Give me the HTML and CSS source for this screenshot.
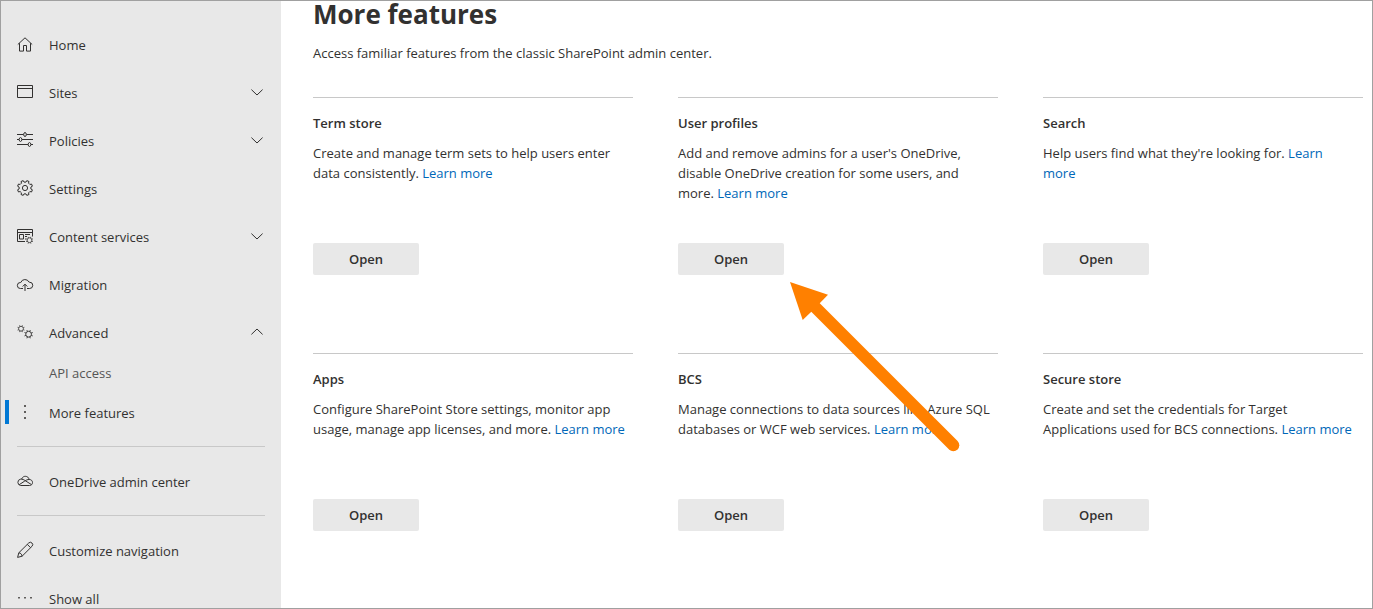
FILE: index.html
```html
<!DOCTYPE html>
<html lang="en">
<head>
<meta charset="utf-8">
<meta name="viewport" content="width=device-width, initial-scale=1">
<title>More features - SharePoint admin center</title>
<link rel="stylesheet" href="styles.css">
</head>
<body>
<svg class="defs" aria-hidden="true">
  <defs>
    <g id="small-gear" stroke-width=".8">
      <circle r="2.4"/>
      <path d="M2.3 1L3.4 1.400M1 2.300L1.400 3.400M-1 2.300L-1.400 3.400M-2.300 1L-3.400 1.400M-2.300-1L-3.400-1.400M-1-2.300L-1.400-3.400M1-2.300L1.400-3.400M2.300-1L3.400-1.400"/>
    </g>
  </defs>
</svg>
<div class="page">
  <nav class="sidebar" aria-label="Admin navigation">
    <ul class="nav-list">
      <li><a class="nav-item" href="#home">
        <svg class="icon" viewBox="0 0 16 16" aria-hidden="true"><path d="M.8 7.500L8 .8l7.200 6.700M2.500 6.200v7.900h4V8.500h3v5.600h4V6.200"/></svg>
        <span>Home</span></a></li>
      <li><button class="nav-item" type="button" aria-expanded="false">
        <svg class="icon" viewBox="0 0 16 16" aria-hidden="true"><path d="M.5.5h15v12H.5zM.5 3.500h15"/></svg>
        <span>Sites</span>
        <svg class="chevron" viewBox="0 0 12 8" aria-hidden="true"><path d="M.4 .6L6 6 11.600 .6"/></svg></button></li>
      <li><button class="nav-item" type="button" aria-expanded="false">
        <svg class="icon" viewBox="0 0 16 16" aria-hidden="true"><path d="M0 1.500h6.600M9.400 1.500H16M0 6.500h2M5 6.500h11M0 11.500h11M14 11.500h2"/><ellipse cx="8" cy="1.500" rx="1.300" ry="2"/><ellipse cx="3.500" cy="6.500" rx="1.300" ry="2"/><ellipse cx="12.500" cy="11.500" rx="1.300" ry="2"/></svg>
        <span>Policies</span>
        <svg class="chevron" viewBox="0 0 12 8" aria-hidden="true"><path d="M.4 .6L6 6 11.600 .6"/></svg></button></li>
      <li><a class="nav-item" href="#settings">
        <svg class="icon" viewBox="0 0 16 16" aria-hidden="true"><g transform="translate(8 7)"><path d="M5.900 1L7.400 1.800 6.500 4 4.900 3.500 3.500 4.900 4 6.500 1.800 7.400 1 5.900-1 5.900-1.800 7.400-4 6.500-3.500 4.900-4.900 3.500-6.500 4-7.400 1.800-5.900 1-5.900-1-7.400-1.800-6.500-4-4.900-3.500-3.500-4.900-4-6.500-1.800-7.400-1-5.900 1-5.900 1.800-7.400 4-6.500 3.500-4.900 4.900-3.500 6.500-4 7.400-1.800 5.900-1z"/><circle r="2.600"/></g></svg>
        <span>Settings</span></a></li>
      <li><button class="nav-item" type="button" aria-expanded="false">
        <svg class="icon" viewBox="0 0 16 16" aria-hidden="true"><path d="M8 12.500H.5V.5h15v7M.5 3.500h15M2.500 5.500h4v4.500h-4zM8 5.500h5M8 7.500h2M8 10h1"/><use href="#small-gear" x="12.500" y="11.200"/></svg>
        <span>Content services</span>
        <svg class="chevron" viewBox="0 0 12 8" aria-hidden="true"><path d="M.4 .6L6 6 11.600 .6"/></svg></button></li>
      <li><a class="nav-item" href="#migration">
        <svg class="icon" viewBox="0 0 16 16" aria-hidden="true"><path d="M6 11.500H3.500a3 3 0 0 1-.3-6h.6a4.400 4.400 0 0 1 8.200-.3h.6a3.100 3.100 0 0 1 0 6.300H10M8 14V7.200M5.700 9.500L8 7.200l2.300 2.300"/></svg>
        <span>Migration</span></a></li>
      <li><button class="nav-item" type="button" aria-expanded="true">
        <svg class="icon" viewBox="0 0 16 16" aria-hidden="true"><use href="#small-gear" x="4" y="3.700"/><use href="#small-gear" transform="translate(11.600 9.200) scale(1.200)"/></svg>
        <span>Advanced</span>
        <svg class="chevron" viewBox="0 0 12 8" aria-hidden="true"><path d="M.4 5.400L6 0 11.600 5.400"/></svg></button>
        <ul class="subnav">
          <li><a class="nav-item nav-item-child" href="#api">API access</a></li>
          <li><a class="nav-item nav-item-current" href="#more" aria-current="page">
            <svg class="icon icon-dots" viewBox="0 0 16 16" aria-hidden="true"><path d="M7 0h2v2H7zM7 6h2v2H7zM7 12h2v2H7z"/></svg>
            <span>More features</span></a></li>
        </ul></li>
    </ul>
    <ul class="nav-list">
      <li><a class="nav-item" href="#onedrive">
        <svg class="icon" viewBox="0 0 16 16" aria-hidden="true"><path d="M3.700 11.500a3.200 3.200 0 0 1-.3-6.300h1C5.600 2.900 7 2.300 8.300 2.300c2 0 3.400 1.200 3.900 3.200 2.100 0 3.300 1.300 3.300 3s-1.200 3-3 3zM4.400 5.200c1.300 0 2.300.4 3.300 1.100l6.600 4.200M2.200 10.700l5.500-3.600c1.400-1 2.800-1.600 4.500-1.600"/></svg>
        <span>OneDrive admin center</span></a></li>
    </ul>
    <ul class="nav-list">
      <li><a class="nav-item" href="#customize">
        <svg class="icon" viewBox="0 0 16 16" aria-hidden="true"><path d="M.6 14.400l1.200-4.600L11.700 0a2.300 2.300 0 0 1 3.300 3.300L5.100 13.200zM1.800 9.800c1.900.2 3.100 1.400 3.300 3.400M10.300 1.400l3.300 3.300"/></svg>
        <span>Customize navigation</span></a></li>
      <li><button class="nav-item" type="button">
        <svg class="icon icon-dots" viewBox="0 0 16 16" aria-hidden="true"><path d="M1 6h2v1.500H1zM7 6h2v1.500H7zM13 6h2v1.500h-2z"/></svg>
        <span>Show all</span></button></li>
    </ul>
  </nav>
  <main class="content">
    <h1 class="title">More features</h1>
    <p class="intro">Access familiar features from the classic SharePoint admin center.</p>
    <div class="cards">
      <section class="card">
        <h2 class="card-title">Term store</h2>
        <p class="card-text">Create and manage term sets to help users enter data consistently. <a href="#term">Learn more</a></p>
        <button class="open" type="button">Open</button>
      </section>
      <section class="card">
        <h2 class="card-title">User profiles</h2>
        <p class="card-text">Add and remove admins for a user's OneDrive, disable OneDrive creation for some users, and more. <a href="#profiles">Learn more</a></p>
        <button class="open" type="button">Open</button>
        <svg class="arrow" viewBox="0 0 170 170" aria-hidden="true"><path class="arrow-head" d="M0 0l38 12.700-8.300 8.600-8.400 8.400L12.700 38z"/><path class="arrow-shaft" d="M24 24l139.300 139.300"/></svg>
      </section>
      <section class="card">
        <h2 class="card-title">Search</h2>
        <p class="card-text">Help users find what they're looking for. <a href="#search">Learn more</a></p>
        <button class="open" type="button">Open</button>
      </section>
      <section class="card">
        <h2 class="card-title">Apps</h2>
        <p class="card-text">Configure SharePoint Store settings, monitor app usage, manage app licenses, and more. <a href="#apps">Learn more</a></p>
        <button class="open" type="button">Open</button>
      </section>
      <section class="card">
        <h2 class="card-title">BCS</h2>
        <p class="card-text">Manage connections to data sources like Azure SQL databases or WCF web services. <a href="#bcs">Learn more</a></p>
        <button class="open" type="button">Open</button>
      </section>
      <section class="card">
        <h2 class="card-title">Secure store</h2>
        <p class="card-text">Create and set the credentials for Target Applications used for BCS connections. <a href="#secure">Learn more</a></p>
        <button class="open" type="button">Open</button>
      </section>
    </div>
  </main>
</div>
</body>
</html>
```

FILE: styles.css
```css
* {
  box-sizing: border-box;
}

body {
  margin: 0;
  background: #fff;
  color: #323130;
  font: 13px/20px "Segoe UI", "Open Sans", "Noto Sans", sans-serif;
}

.defs {
  position: absolute;
  width: 0;
  height: 0;
}

.page {
  display: flex;
  height: 100vh;
  overflow: hidden;
  border: 1px solid #a0a0a0;
}

.sidebar {
  flex: none;
  width: 280px;
  padding-top: 24px;
  overflow: hidden;
  background: #e8e8e8;
}

.nav-list,
.subnav {
  margin: 0;
  padding: 0;
  list-style: none;
}

.nav-list {
  display: grid;
  gap: 8px;
}

.nav-list + .nav-list {
  margin: 13px 16px 0;
  padding-top: 15px;
  border-top: 1px solid #c8c8c8;
}

.nav-list + .nav-list .nav-item {
  padding: 0;
}

.nav-item {
  display: flex;
  align-items: center;
  gap: 16px;
  width: 100%;
  height: 40px;
  padding: 0 18px 0 16px;
  border: 0;
  background: none;
  color: inherit;
  font: inherit;
  text-align: left;
  text-decoration: none;
}

.nav-item-child {
  padding-left: 48px;
  color: #555;
}

.nav-item-current {
  position: relative;
}

.nav-item-current::before {
  content: "";
  position: absolute;
  top: 7px;
  left: 4px;
  width: 4px;
  height: 24px;
  background: #0078d4;
}

.icon,
.chevron {
  flex: none;
  overflow: visible;
  fill: none;
  stroke: #323130;
}

.icon {
  width: 16px;
  height: 16px;
}

.icon-dots {
  fill: #605e5c;
  stroke: none;
}

.chevron {
  width: 12px;
  height: 8px;
  margin-left: auto;
}

.content {
  flex: 1;
  min-width: 0;
  padding: 0 9px 0 32px;
}

.title {
  margin: 0;
  font-size: 26px;
  line-height: 26px;
  font-weight: 700;
}

.intro {
  margin: 16px 0 34px;
}

.cards {
  display: grid;
  grid-template-columns: repeat(auto-fill, minmax(300px, 1fr));
  column-gap: 45px;
  row-gap: 78px;
}

.card {
  position: relative;
  display: flex;
  flex-direction: column;
  align-items: flex-start;
  padding-top: 15px;
  border-top: 1px solid #c8c8c8;
}

.card-title {
  margin: 0 0 10px;
  font-size: 13px;
  line-height: 20px;
  font-weight: 600;
}

.card-text {
  min-height: 100px;
  margin: 0;
  padding-right: 6px;
}

.card-text a {
  color: #0067b8;
  text-decoration: none;
}

.open {
  min-width: 106px;
  height: 32px;
  padding: 0 16px;
  border: 0;
  border-radius: 2px;
  background: #e8e8e8;
  color: inherit;
  font: inherit;
  font-weight: 600;
}

.arrow {
  position: absolute;
  z-index: 1;
  top: 184px;
  left: 112px;
  width: 170px;
  height: 170px;
  overflow: visible;
  pointer-events: none;
}

.arrow-head {
  fill: #ff8000;
}

.arrow-shaft {
  fill: none;
  stroke: #ff8000;
  stroke-width: 12;
  stroke-linecap: round;
}
```
